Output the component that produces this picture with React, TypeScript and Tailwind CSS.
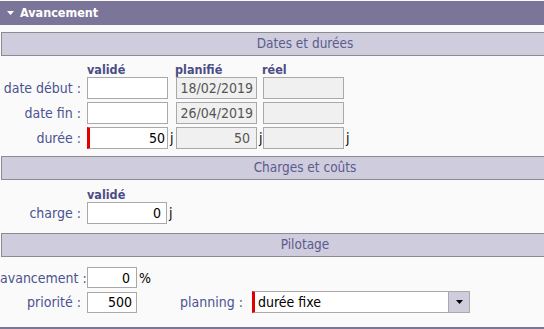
import React from 'react';

const font = "font-['DejaVu_Sans_Condensed','DejaVu_Sans',sans-serif]";

function SectionBar({ title }: { title: string }) {
  return (
    <div className="ml-[1px] w-[607px] h-[24px] border-y border-l border-[#8c8c8c] bg-[#cfccdd] flex items-center justify-center text-[13.5px] text-[#5b5b8e] leading-none">
      {title}
    </div>
  );
}

function Field({
  value = '',
  width = 'w-[81px]',
  readOnly = false,
  required = false,
  pad = 'pr-[4px]',
  height = 'h-[22px]',
}: {
  value?: string;
  width?: string;
  readOnly?: boolean;
  required?: boolean;
  pad?: string;
  height?: string;
}) {
  return (
    <div
      className={`${width} ${height} shrink-0 border border-[#a9a9a9] flex items-center justify-end ${pad} text-[14px] leading-none ${
        readOnly ? 'bg-[#f0f0f0] text-[#555]' : 'bg-white text-black'
      } ${required ? 'border-l-[3px] border-l-[#e00000]' : ''}`}
    >
      {value}
    </div>
  );
}

function Label({ children }: { children: React.ReactNode }) {
  return (
    <div className="w-[81px] shrink-0 text-right whitespace-nowrap text-[14px] text-[#4b5390] leading-none mr-[6px]">
      {children}
    </div>
  );
}

function Unit({ children, w }: { children: React.ReactNode; w: string }) {
  return <div className={`${w} shrink-0 pl-[2px] text-[14px] text-black leading-none`}>{children}</div>;
}

export default function App() {
  return (
    <div className={`w-[544px] h-[329px] overflow-hidden bg-[#fafafa] flex flex-col ${font}`}>
      {/* title bar */}
      <div className="mt-[1px] h-[24px] bg-[#7b7699] flex items-center pl-[7px] gap-[6px] text-white font-bold text-[12.5px]">
        <svg width="7" height="5" viewBox="0 0 7 5" className="mt-[1px]">
          <polygon points="0,0 7,0 3.5,4" fill="#fff" />
        </svg>
        <span>Avancement</span>
      </div>

      <div className="mt-[7px]">
        <SectionBar title="Dates et durées" />
      </div>

      {/* column headers */}
      <div className="h-[21px] flex items-end pl-[87px] text-[12.5px] font-bold text-[#4a4c85] leading-[15px]">
        <div className="w-[88px]">validé</div>
        <div className="w-[87px]">planifié</div>
        <div>réel</div>
      </div>

      <div className="flex flex-col gap-[3px]">
        <div className="flex items-center">
          <Label>date début :</Label>
          <Field />
          <Unit w="w-[8px]">{''}</Unit>
          <Field value="18/02/2019" readOnly pad="pr-[3px]" />
          <Unit w="w-[6px]">{''}</Unit>
          <Field readOnly />
        </div>
        <div className="flex items-center">
          <Label>date fin :</Label>
          <Field />
          <Unit w="w-[8px]">{''}</Unit>
          <Field value="26/04/2019" readOnly pad="pr-[3px]" />
          <Unit w="w-[6px]">{''}</Unit>
          <Field readOnly />
        </div>
        <div className="flex items-center">
          <Label>durée :</Label>
          <Field value="50" required pad="pr-[2px]" />
          <Unit w="w-[8px]">j</Unit>
          <Field value="50" readOnly pad="pr-[6px]" />
          <Unit w="w-[6px]">j</Unit>
          <Field readOnly />
          <Unit w="w-[8px]">j</Unit>
        </div>
      </div>

      <div className="mt-[7px]">
        <SectionBar title="Charges et coûts" />
      </div>

      <div className="h-[22px] flex items-end pl-[87px] text-[12.5px] font-bold text-[#4a4c85] leading-[15px]">
        validé
      </div>
      <div className="flex items-center">
        <Label>charge :</Label>
        <Field value="0" pad="pr-[5px]" width="w-[80px]" />
        <Unit w="w-[8px]">j</Unit>
      </div>

      <div className="mt-[9px]">
        <SectionBar title="Pilotage" />
      </div>

      <div className="mt-[10px] flex flex-col gap-[3px]">
        <div className="flex items-center">
          <Label>avancement :</Label>
          <Field value="0" width="w-[50px]" height="h-[21px]" pad="pr-[6px]" />
          <Unit w="w-[14px]">%</Unit>
        </div>
        <div className="flex items-center">
          <Label>priorité :</Label>
          <Field value="500" width="w-[50px]" height="h-[21px]" pad="pr-[4px]" />
          <div className="w-[115px] shrink-0 text-right text-[14px] text-[#4b5390] leading-none pr-[9px]">planning :</div>
          <div className="w-[218px] h-[22px] flex border border-[#a9a9a9] border-l-[3px] border-l-[#e00000] bg-white">
            <div className="flex-1 flex items-center pl-[3px] text-[14px] text-black leading-none">durée fixe</div>
            <div className="w-[21px] border-l border-[#a9a9a9] bg-[#cfccdd] flex items-center justify-center">
              <svg width="7" height="4" viewBox="0 0 7 4">
                <polygon points="0,0 7,0 3.5,4" fill="#000" />
              </svg>
            </div>
          </div>
        </div>
      </div>

      <div className="mt-auto h-[2px] bg-[#7b7699]" />
    </div>
  );
}
